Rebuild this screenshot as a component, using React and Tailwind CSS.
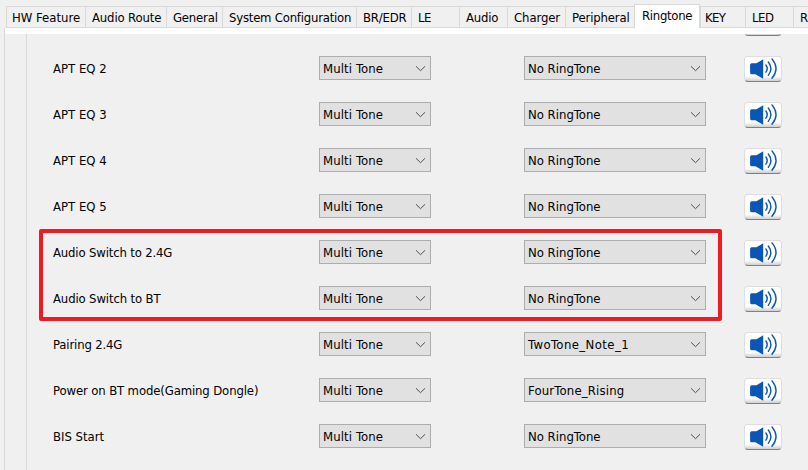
import React from "react";
import clsx from "clsx";

const TABS = [
  { label: "HW Feature", width: "w-[79px]", text: "pl-[5px]" },
  { label: "Audio Route", width: "w-[81px]", text: "pl-[6px] tracking-[-0.15px]" },
  { label: "General", width: "w-[56px]", text: "pl-[6px] tracking-[-0.2px]" },
  { label: "System Configuration", width: "w-[134px]", text: "pl-[6px] tracking-[-0.22px]" },
  { label: "BR/EDR", width: "w-[55px]", text: "pl-[6px] tracking-[-0.2px]" },
  { label: "LE", width: "w-[48px]", text: "pl-[6px] tracking-[-0.4px]" },
  { label: "Audio", width: "w-[48px]", text: "pl-[6px] tracking-[-0.2px]" },
  { label: "Charger", width: "w-[58px]", text: "pl-[6px] tracking-[-0.1px]" },
  { label: "Peripheral", width: "w-[69px]", text: "pl-[6px] tracking-[-0.15px]" },
  { label: "Ringtone", width: "w-[66px]", text: "pl-[7px] tracking-[-0.3px]", active: true },
  { label: "KEY", width: "w-[45px]", text: "pl-[4px] tracking-[-0.7px]" },
  { label: "LED", width: "w-[48px]", text: "pl-[6px] tracking-[-0.5px]" },
  { label: "R", width: "w-[80px]", text: "pl-[6px]" },
];

const ROWS = [
  { label: "APT EQ 1" },
  { label: "APT EQ 2" },
  { label: "APT EQ 3" },
  { label: "APT EQ 4" },
  { label: "APT EQ 5" },
  { label: "Audio Switch to 2.4G", spacing: "tracking-[-0.16px]" },
  { label: "Audio Switch to BT", spacing: "tracking-[-0.14px]" },
  {
    label: "Pairing 2.4G",
    spacing: "tracking-[-0.16px]",
    tone: "TwoTone_Note_1",
    toneSpacing: "tracking-[0.42px]",
  },
  {
    label: "Power on BT mode(Gaming Dongle)",
    spacing: "tracking-[-0.13px]",
    tone: "FourTone_Rising",
    toneSpacing: "tracking-[0.18px]",
  },
  { label: "BIS Start" },
];

function Tab({ label, width, text, active }) {
  return (
    <div
      className={clsx(
        "shrink-0 whitespace-nowrap border-l border-t border-[#d9d9d9] leading-[22px]",
        width,
        text,
        active ? "h-6 border-r bg-white" : "h-[22px] border-b"
      )}
    >
      {label}
    </div>
  );
}

function Select({ value, className }) {
  return (
    <div
      className={clsx(
        "flex h-6 shrink-0 items-start justify-between border border-[#adadad] bg-[#e1e1e1] pl-[3px] pr-1",
        className
      )}
    >
      <span className="whitespace-nowrap leading-6">{value}</span>
      <svg className="mt-2" width="11" height="7" viewBox="0 0 11 7" fill="none">
        <path d="M1 1.3l4.5 4.4L10 1.3" stroke="#505050" strokeWidth="1" />
      </svg>
    </div>
  );
}

function PlayButton() {
  return (
    <button className="flex h-[26px] w-[38px] shrink-0 items-start rounded-[4px] border border-[#dedede] border-b-[#808080] bg-linear-to-b from-white from-80% to-[#cfcfcf]">
      <svg width="36" height="23" viewBox="0 0 36 23" fill="none">
        <path
          d="M6.6 6.3Q5.1 6.4 5.1 8V15.4Q5.1 17.3 6.8 17.3H10.5L18.2 21.7V2.2L11.5 6.3Z"
          fill="#0a56b5"
        />
        <g stroke="#0a56b5" strokeWidth="1.4" strokeLinecap="round">
          <path d="M20.9 8Q23.5 11.6 20.9 15.2" />
          <path d="M23.3 5Q28.4 11.6 23.3 18.3" />
          <path d="M27 1.9Q35 11.6 27 21.3" />
        </g>
      </svg>
    </button>
  );
}

export default function App() {
  return (
    <div className="relative h-[470px] w-[808px] overflow-hidden bg-[#f0f0f0] font-['DejaVu_Sans_Condensed','DejaVu_Sans',sans-serif] text-[13px] text-black">
      <div className="flex h-7 items-end overflow-hidden pl-[6px]">
        {TABS.map((tab) => (
          <Tab key={tab.label} {...tab} />
        ))}
      </div>
      <div className="ml-1 h-[442px] border-l border-[#d9d9d9]">
        <div className="h-[6px] bg-white" />
        <div className="ml-[21px] h-[436px] overflow-hidden border-l border-[#d9d9d9]">
          <div className="-mt-[35px] flex flex-col">
            {ROWS.map(({ label, spacing, tone = "No RingTone", toneSpacing }) => (
              <div key={label} className="flex h-[46px] items-start pt-[11px] pl-[26px]">
                <span
                  className={clsx(
                    "h-6 w-[266px] shrink-0 whitespace-nowrap leading-[26px]",
                    spacing
                  )}
                >
                  {label}
                </span>
                <Select value="Multi Tone" className="w-[112px] tracking-[0.1px]" />
                <Select value={tone} className={clsx("ml-[93px] w-[182px]", toneSpacing)} />
                <div className="ml-[38px]">
                  <PlayButton />
                </div>
              </div>
            ))}
          </div>
        </div>
      </div>
      <div className="absolute left-[39px] top-[229px] h-[92px] w-[683px] rounded-[2px] border-4 border-[#ed1c24]" />
    </div>
  );
}
